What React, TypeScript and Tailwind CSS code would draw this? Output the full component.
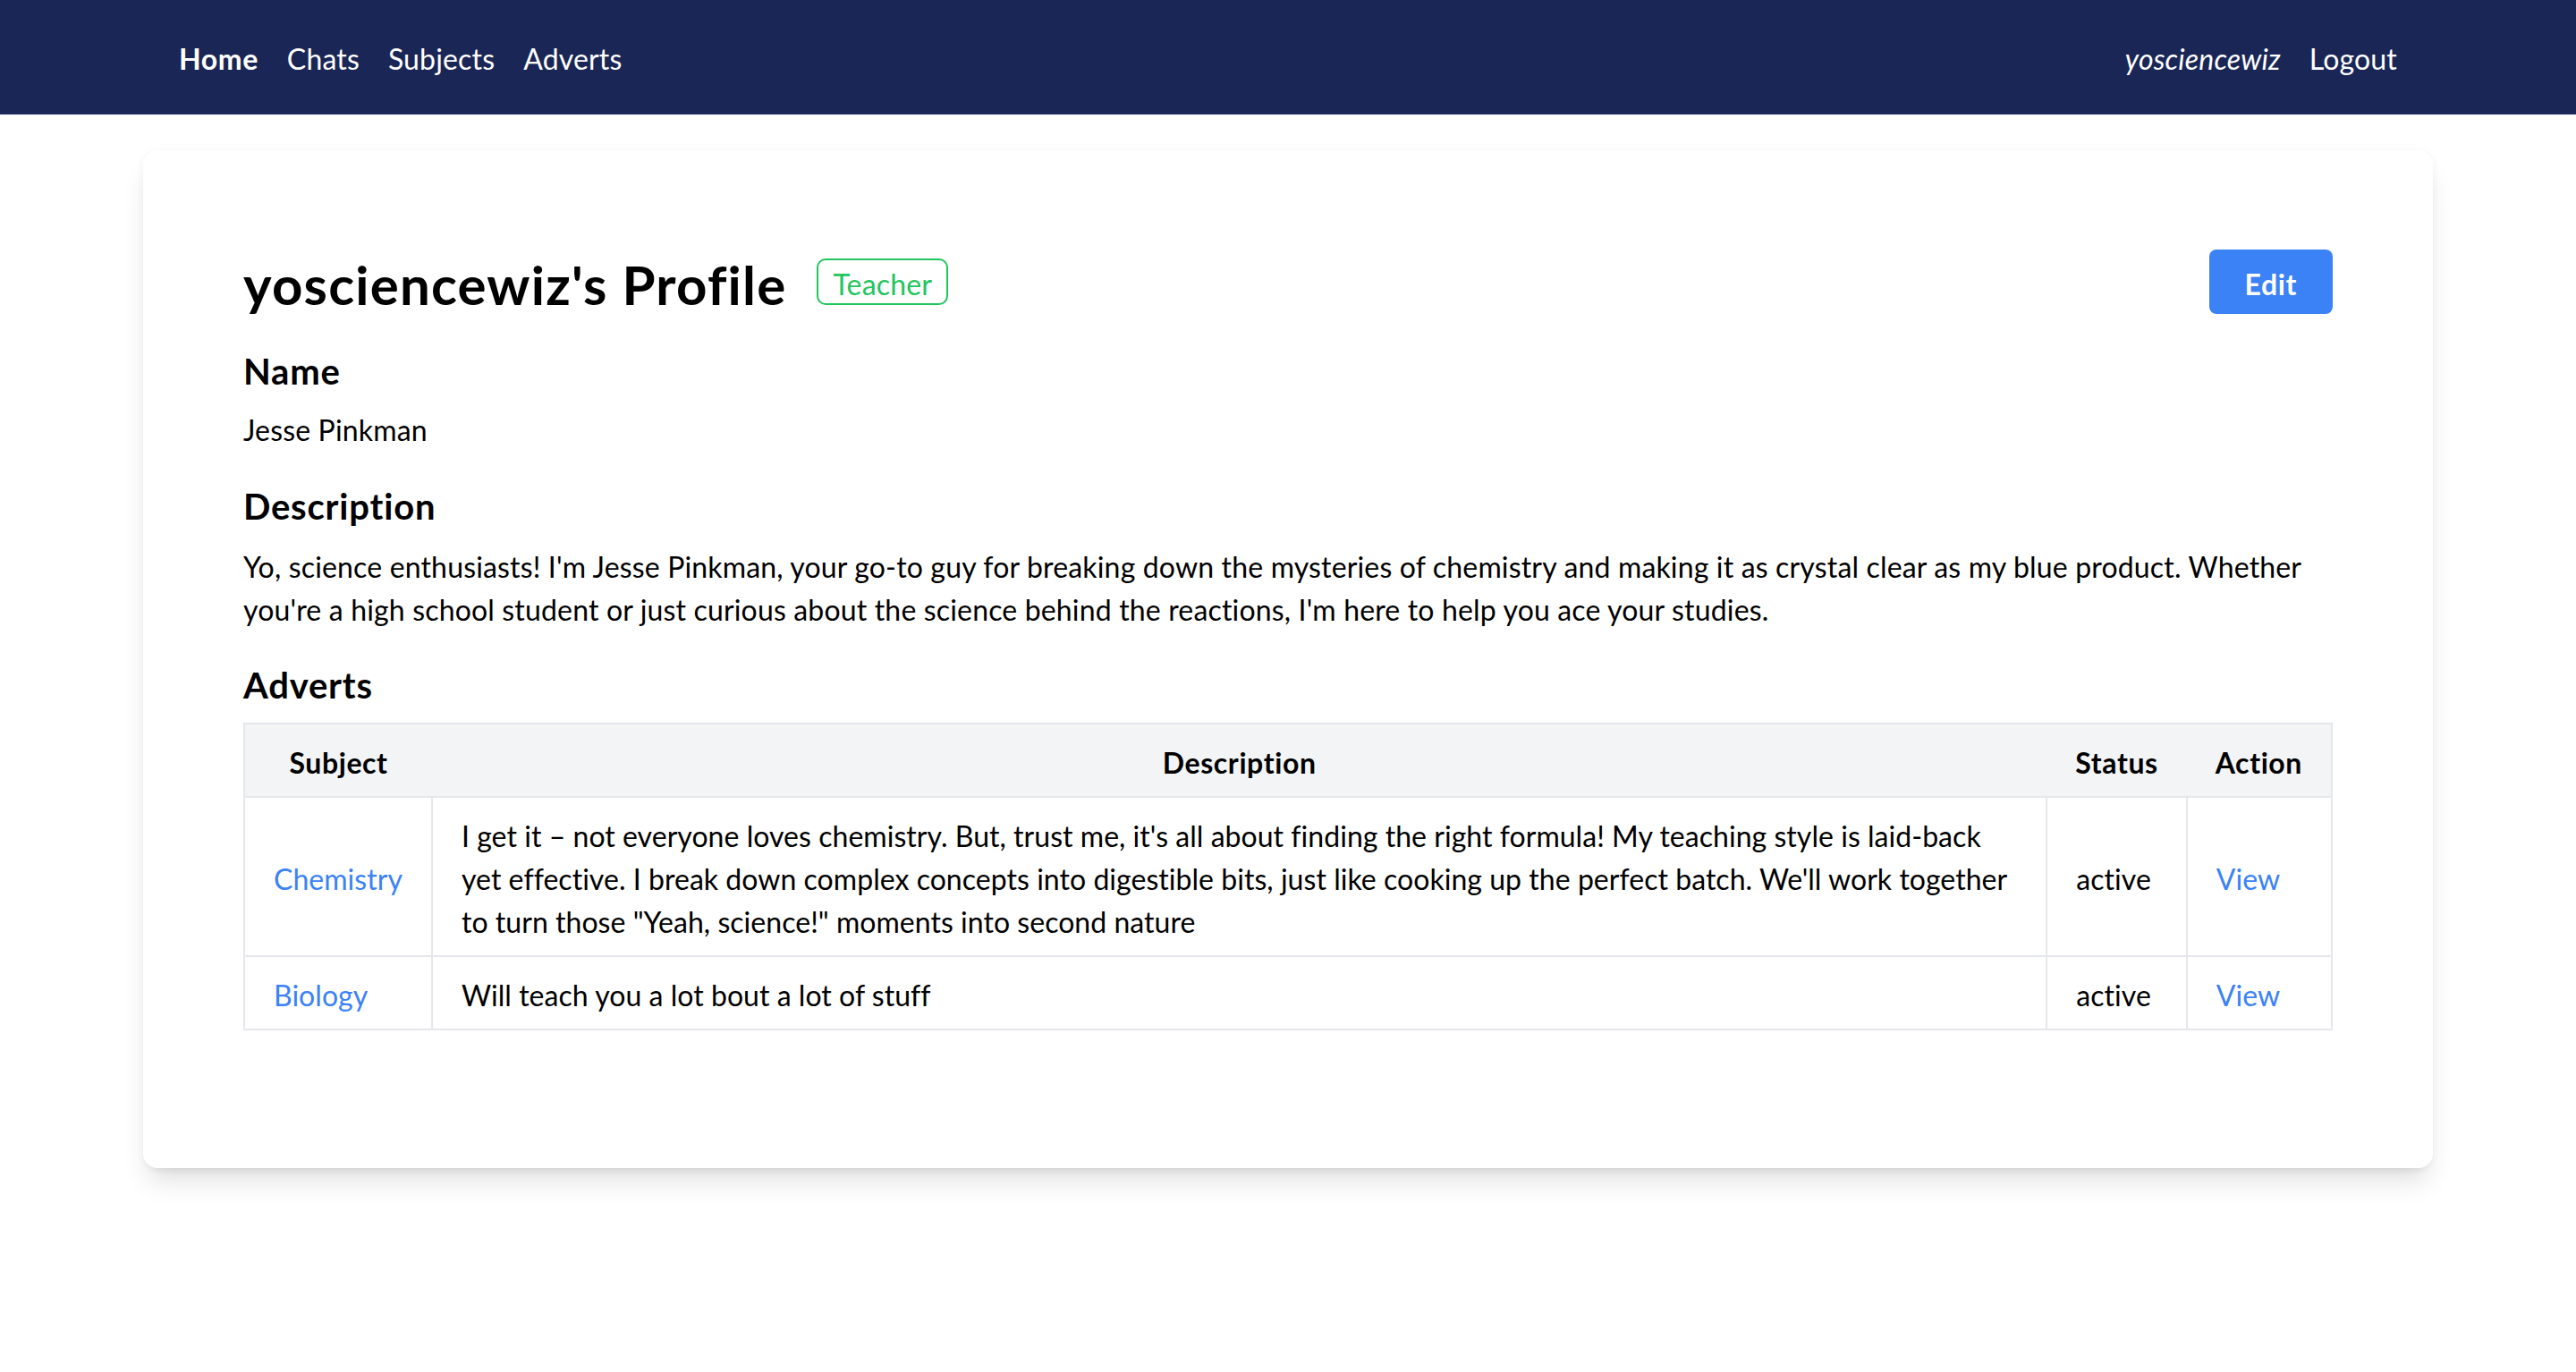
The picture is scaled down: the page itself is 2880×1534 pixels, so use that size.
import React from "react";

export default function App() {
  const td = "border-2 border-[#e5e7eb] px-[32px] pt-[19px] pb-[13px] align-middle tracking-[0.04px]";
  const th = "px-[32px] pt-[19px] pb-[13px] text-center font-bold tracking-[0.6px]";
  return (
    <div className="min-h-screen bg-white font-['Lato','Noto_Sans',sans-serif] tracking-[0.16px] text-black">
      <nav className="h-[128px] bg-[#1a2655]">
        <div className="mx-auto flex h-full max-w-[2560px] items-center justify-between px-[40px] pt-[4px] text-[32px] leading-[48px] text-white">
          <div className="flex items-center gap-[32px]">
            <a className="font-bold tracking-[0.6px]">Home</a>
            <a>Chats</a>
            <a>Subjects</a>
            <a>Adverts</a>
          </div>
          <div className="flex items-center gap-[32px]">
            <span className="italic">yosciencewiz</span>
            <a>Logout</a>
          </div>
        </div>
      </nav>

      <main className="mx-auto mt-[40px] max-w-[2560px] rounded-[16px] bg-white px-[112px] pt-[111px] pb-[154px] shadow-[0_20px_30px_-6px_rgba(0,0,0,0.12),0_8px_12px_-8px_rgba(0,0,0,0.1),0_0_12px_rgba(0,0,0,0.03)]">
        <div className="flex items-center justify-between">
          <div className="flex items-center">
            <h1 className="pt-[6px] text-[60px] font-bold leading-[66px] tracking-[1.2px]">yosciencewiz's Profile</h1>
            <span className="ml-[34px] rounded-[10px] border-2 border-[#22c55e] px-[16px] pt-[6px] text-[32px] leading-[42px] text-[#22c55e]">
              Teacher
            </span>
          </div>
          <button className="rounded-[8px] bg-[#3b82f6] px-[40px] pt-[15px] pb-[9px] text-[32px] font-bold leading-[48px] tracking-[0.6px] text-white">
            Edit
          </button>
        </div>

        <h2 className="mt-[36px] text-[40px] font-bold leading-[56px] tracking-[0.8px]">Name</h2>
        <p className="mt-[14px] text-[32px] leading-[48px]">Jesse Pinkman</p>

        <h2 className="mt-[33px] text-[40px] font-bold leading-[56px] tracking-[0.8px]">Description</h2>
        <p className="mt-[16px] text-[32px] leading-[48px]">
          Yo, science enthusiasts! I'm Jesse Pinkman, your go-to guy for breaking down the mysteries of chemistry and making it as crystal clear as my blue product. Whether you're a high school student or just curious about the science behind the reactions, I'm here to help you ace your studies.
        </p>

        <h2 className="mt-[32px] text-[40px] font-bold leading-[56px] tracking-[0.8px]">Adverts</h2>
        <table className="mt-[14px] w-full border-collapse border-2 border-[#e5e7eb] text-[32px] leading-[48px]">
          <thead>
            <tr className="border-b-2 border-[#e5e7eb] bg-[#f3f4f6]">
              <th className={th}>Subject</th>
              <th className={th}>Description</th>
              <th className={th}>Status</th>
              <th className={th}>Action</th>
            </tr>
          </thead>
          <tbody>
            <tr>
              <td className={td}>
                <a className="text-[#3b82f6]">Chemistry</a>
              </td>
              <td className={td}>
                I get it – not everyone loves chemistry. But, trust me, it's all about finding the right formula! My teaching style is laid-back yet effective. I break down complex concepts into digestible bits, just like cooking up the perfect batch. We'll work together to turn those "Yeah, science!" moments into second nature
              </td>
              <td className={td}>active</td>
              <td className={td}>
                <a className="text-[#3b82f6]">View</a>
              </td>
            </tr>
            <tr>
              <td className={td}>
                <a className="text-[#3b82f6]">Biology</a>
              </td>
              <td className={td}>Will teach you a lot bout a lot of stuff</td>
              <td className={td}>active</td>
              <td className={td}>
                <a className="text-[#3b82f6]">View</a>
              </td>
            </tr>
          </tbody>
        </table>
      </main>
    </div>
  );
}
